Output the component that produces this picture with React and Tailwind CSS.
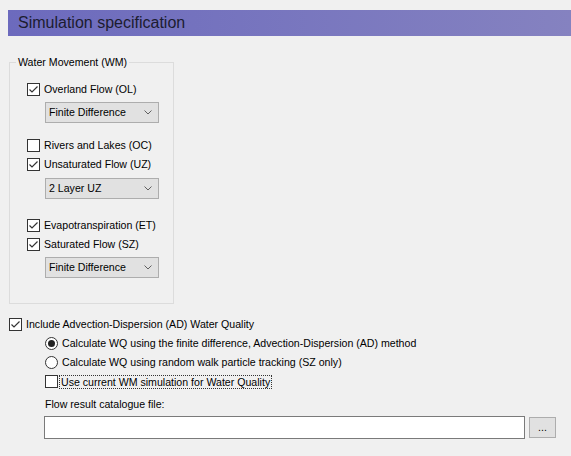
import React from "react";

const font = { fontFamily: '"Liberation Sans", Arial, sans-serif' };

function Check({ checked }) {
  return (
    <span className="w-[13px] h-[13px] border border-[#333333] bg-white flex items-center justify-center shrink-0">
      {checked && (
        <svg width="11" height="11" viewBox="0 0 11 11">
          <path d="M1.5 5.5 L4 8 L9.5 2.5" fill="none" stroke="#333333" strokeWidth="1.2" />
        </svg>
      )}
    </span>
  );
}

function Radio({ checked }) {
  return (
    <span className="w-[13px] h-[13px] rounded-full border border-[#333333] bg-white flex items-center justify-center shrink-0">
      {checked && <span className="w-[7px] h-[7px] rounded-full bg-[#222222]" />}
    </span>
  );
}

function CheckRow({ checked, label, className = "" }) {
  return (
    <div className={"h-[13px] flex items-center gap-[4px] " + className}>
      <Check checked={checked} />
      <span className="leading-[13px] whitespace-nowrap">{label}</span>
    </div>
  );
}

function Select({ value, className = "" }) {
  return (
    <div
      className={
        "w-[114px] h-[21px] border border-[#adadad] bg-[#e1e1e1] flex items-center justify-between pl-[3px] pr-[6px] " +
        className
      }
    >
      <span className="leading-[13px]">{value}</span>
      <svg width="8" height="5" viewBox="0 0 8 5">
        <path d="M0.5 0.5 L4 4 L7.5 0.5" fill="none" stroke="#606060" strokeWidth="1" />
      </svg>
    </div>
  );
}

export default function App() {
  return (
    <div className="w-[571px] h-[456px] bg-[#f0f0f0] overflow-hidden text-[10.6px] text-black" style={font}>
      <div className="pt-[10px] pl-[8px]">
        <div className="h-[26px] bg-gradient-to-r from-[#6c6abd] to-[#8582c0] flex items-center pl-[10px] text-[16px] text-[#1c1c30]">
          Simulation specification
        </div>
      </div>

      <fieldset className="ml-[9px] mt-[20px] w-[165px] h-[248px] border border-[#dcdcdc]">
        <legend className="ml-[6px] px-[2px] leading-[13px]">Water Movement (WM)</legend>
        <div className="pl-[17px]">
          <CheckRow checked label="Overland Flow (OL)" className="mt-[14px]" />
          <Select value="Finite Difference" className="ml-[18px] mt-[6px]" />
          <CheckRow label="Rivers and Lakes (OC)" className="mt-[16px]" />
          <CheckRow checked label="Unsaturated Flow (UZ)" className="mt-[6px]" />
          <Select value="2 Layer UZ" className="ml-[18px] mt-[7px]" />
          <CheckRow checked label="Evapotranspiration (ET)" className="mt-[20px]" />
          <CheckRow checked label="Saturated Flow (SZ)" className="mt-[6px]" />
          <Select value="Finite Difference" className="ml-[18px] mt-[6px]" />
        </div>
      </fieldset>

      <div className="pl-[9px]">
        <CheckRow checked label="Include Advection-Dispersion (AD) Water Quality" className="mt-[14px]" />
        <div className="pl-[36px]">
          <div className="h-[13px] flex items-center gap-[4px] mt-[6px]">
            <Radio checked />
            <span className="leading-[13px] whitespace-nowrap">
              Calculate WQ using the finite difference, Advection-Dispersion (AD) method
            </span>
          </div>
          <div className="h-[13px] flex items-center gap-[4px] mt-[6px]">
            <Radio />
            <span className="leading-[13px] whitespace-nowrap">
              Calculate WQ using random walk particle tracking (SZ only)
            </span>
          </div>
          <div className="h-[13px] flex items-center gap-[1px] mt-[6px]">
            <Check />
            <span className="leading-[12px] whitespace-nowrap border border-dotted border-[#333333] px-[1px]">
              Use current WM simulation for Water Quality
            </span>
          </div>
          <div className="mt-[10px] leading-[13px]">Flow result catalogue file:</div>
          <div className="mt-[5px] flex items-center gap-[4px] -ml-[1px]">
            <div className="w-[481px] h-[23px] bg-white border border-[#7a7a7a]" />
            <div className="w-[27px] h-[21px] bg-[#e1e1e1] border border-[#adadad] flex items-center justify-center leading-[13px]">
              ...
            </div>
          </div>
        </div>
      </div>
    </div>
  );
}
